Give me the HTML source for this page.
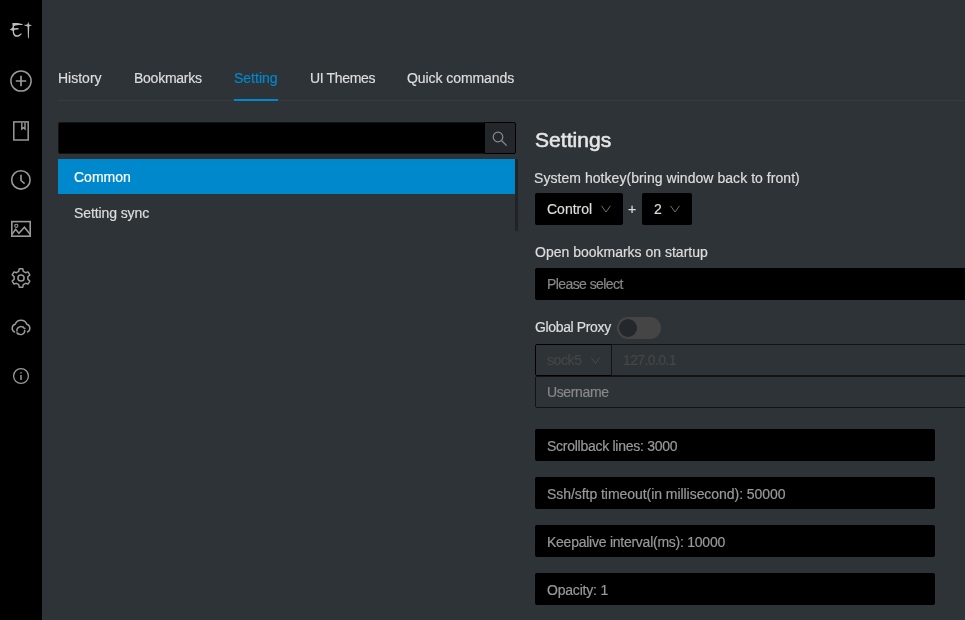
<!DOCTYPE html>
<html><head><meta charset="utf-8">
<style>
*{margin:0;padding:0;box-sizing:border-box}
html,body{width:965px;height:620px;overflow:hidden;background:#2e3338;font-family:"Liberation Sans",sans-serif;font-size:14px;color:#ddd}
.abs{position:absolute}
.t{position:absolute;line-height:22px;height:22px;white-space:nowrap;will-change:transform;-webkit-text-stroke:0.2px currentColor}
#side{position:absolute;left:0;top:0;width:42px;height:620px;background:#000}
#side svg{position:absolute;left:0;top:0}
.ic{fill:none;stroke:#999;stroke-width:1.6}
.tabline{position:absolute;left:58px;top:100px;width:907px;height:1px;background:#363b44}
.ink{position:absolute;left:234px;top:99px;width:44px;height:2px;background:#08c}
.search{position:absolute;left:58px;top:122px;width:427px;height:32px;background:#000;border:1px solid #141314;border-radius:2px 0 0 2px}
.sbtn{position:absolute;left:484px;top:122px;width:32px;height:32px;background:#23272b;border:1px solid #000;border-radius:0 2px 2px 0}
.item-act{position:absolute;left:58px;top:159px;width:457px;height:35px;background:#08c}
.track{position:absolute;left:515px;top:159px;width:3px;height:72px;background:#202428}
.box{position:absolute;background:#000;border-radius:2px}
.chev{position:absolute;fill:none;stroke:#666;stroke-width:1}
</style></head><body>
<div id="side">
  <!-- logo -->
  <svg width="42" height="42" viewBox="0 0 42 42"><g transform="translate(6,14) scale(0.051613)" fill="#bdbdbd">
    <path d="M120,180 C190,168 260,182 322,196 L318,214 C262,210 205,212 160,232 C150,250 148,262 165,275 L245,272 L238,300 L165,305 C152,330 150,360 172,392 C200,425 245,418 290,372 L308,382 C275,440 215,455 168,432 C138,412 128,372 132,330 C112,318 92,312 72,300 C98,288 118,272 128,252 C130,230 128,205 120,180 Z"/>
    <path d="M432,148 L446,204 L505,220 L450,238 L442,472 L426,472 L418,240 L338,212 L414,204 Z"/>
  </g></svg>

  <svg style="top:0" width="42" height="620" viewBox="0 0 42 620">
    <g class="ic">
      <circle cx="21" cy="81" r="10.1" stroke-width="1.5"/>
      <path d="M15.8 81H26.2M21 75.8V86.2" stroke-width="1.7"/>
      <rect x="13.8" y="121.9" width="14.4" height="18.1" stroke-width="1.5"/>
      <path d="M21.8 122.5V129L23.4 127.6L25 129V122.5" stroke-width="1.4"/>
      <circle cx="20.9" cy="179.9" r="9.2" stroke-width="1.6"/>
      <path d="M21 174.8V180.5L24.6 183.6" stroke-width="1.6"/>
      <rect x="11.8" y="221.6" width="18.4" height="14.6" stroke-width="1.6"/>
      <path d="M12 234.4L15.6 229.3L18.9 233.3L24.4 227.2L30.3 234.4" stroke-width="1.6"/>
      <circle cx="16.3" cy="225.8" r="1.6" stroke-width="1.1"/>
      <path d="M18.72 271.38 L19.23 268.87 L22.77 268.87 L23.28 271.38 L25.59 272.72 L28.02 271.90 L29.79 274.97 L27.87 276.66 L27.87 279.34 L29.79 281.03 L28.02 284.10 L25.59 283.28 L23.28 284.62 L22.77 287.13 L19.23 287.13 L18.72 284.62 L16.41 283.28 L13.98 284.10 L12.21 281.03 L14.13 279.34 L14.13 276.66 L12.21 274.97 L13.98 271.90 L16.41 272.72Z" stroke-width="1.5" stroke-linejoin="round"/>
      <circle cx="21" cy="278" r="3.1" stroke-width="1.5"/>
      <path d="M14.5 332 A4.2 4.2 0 0 1 15.2 324.2 A6.3 6.3 0 0 1 26.8 324.2 A4.2 4.2 0 0 1 27.5 332" stroke-width="1.5" stroke-linecap="round"/>
      <path d="M17.03 331.61 A3.9 3.9 0 0 1 23.70 327.99 M24.57 329.59 A3.9 3.9 0 0 1 17.90 333.21" stroke-width="1.4"/><path d="M23.50 326.39 L24.00 328.39 L25.70 328.19 M18.10 334.81 L17.60 332.81 L15.90 333.01" stroke-width="1.1"/>
      <circle cx="21" cy="376" r="7.4" stroke-width="1.3"/>
      <path d="M21 372.2V373.4M21 375V380" stroke-width="1.5"/>
    </g>
  </svg>
</div>
<div class="t" style="left:58px;top:67px">History</div>
<div class="t" style="left:134px;top:67px;letter-spacing:-0.25px">Bookmarks</div>
<div class="t" style="left:234px;top:67px;color:#08c">Setting</div>
<div class="t" style="left:310px;top:67px;letter-spacing:-0.35px">UI Themes</div>
<div class="t" style="left:407px;top:67px;letter-spacing:-0.07px">Quick commands</div>
<div class="tabline"></div>
<div class="ink"></div>

<div class="search"></div>
<div class="sbtn"></div>
<div class="item-act"></div>
<div class="track"></div>
<div class="t" style="left:74px;top:166px;color:#fff">Common</div>
<div class="t" style="left:74px;top:202px;letter-spacing:-0.1px">Setting sync</div>

<div class="t" style="left:534.5px;top:126px;font-size:21px;font-weight:normal;-webkit-text-stroke:0.55px #e6e6e6;color:#e6e6e6;line-height:28px;height:28px;letter-spacing:0.05px">Settings</div>
<div class="t" style="left:534px;top:167px;letter-spacing:0.05px">System hotkey(bring window back to front)</div>
<div class="box" style="left:535px;top:193px;width:88px;height:32px"></div>
<div class="t" style="left:547px;top:198px">Control</div>
<div class="t" style="left:628px;top:198px">+</div>
<div class="box" style="left:642px;top:193px;width:50px;height:32px"></div>
<div class="t" style="left:654px;top:198px">2</div>

<div class="t" style="left:535px;top:241px">Open bookmarks on startup</div>
<div class="box" style="left:535px;top:268px;width:440px;height:32px"></div>
<div class="t" style="left:547px;top:273px;color:#888;letter-spacing:-0.58px">Please select</div>

<div class="t" style="left:535px;top:316px;letter-spacing:-0.36px">Global Proxy</div>

<div class="box" style="left:535px;top:429px;width:400px;height:32px"></div>
<div class="t" style="left:547px;top:435px;color:#999;letter-spacing:-0.27px">Scrollback lines: 3000</div>
<div class="box" style="left:535px;top:477px;width:400px;height:32px"></div>
<div class="t" style="left:547px;top:483px;color:#999;letter-spacing:-0.05px">Ssh/sftp timeout(in millisecond): 50000</div>
<div class="box" style="left:535px;top:525px;width:400px;height:32px"></div>
<div class="t" style="left:547px;top:531px;color:#999;letter-spacing:-0.25px">Keepalive interval(ms): 10000</div>
<div class="box" style="left:535px;top:573px;width:400px;height:32px"></div>
<div class="t" style="left:547px;top:579px;color:#999;letter-spacing:-0.2px">Opacity: 1</div>

<svg class="abs" style="left:0;top:0" width="965" height="620" viewBox="0 0 965 620">
  <circle cx="498" cy="137" r="4.8" fill="none" stroke="#8a8a8a" stroke-width="1.2"/>
  <path d="M501.5 140.5L506.6 145.6" stroke="#8a8a8a" stroke-width="1.3" fill="none"/>
  <path d="M601.5 205.8L606 212L610.5 205.8" fill="none" stroke="#707070" stroke-width="1"/>
  <path d="M670.5 205.8L675 212L679.5 205.8" fill="none" stroke="#707070" stroke-width="1"/>
  <path d="M591.3 357.5L595.5 363.5L599.7 357.5" fill="none" stroke="#484848" stroke-width="1"/>
</svg>
<div class="abs" style="left:617px;top:317px;width:44px;height:22px;border-radius:11px;background:#454545"></div>
<div class="abs" style="left:619px;top:319px;width:18px;height:18px;border-radius:9px;background:#24282c"></div>

<div class="abs" style="left:535px;top:344px;width:77px;height:32px;border:1px solid #000;border-radius:2px 0 0 2px"></div>
<div class="abs" style="left:611px;top:344px;width:400px;height:32px;border:1px solid #141314"></div>
<div class="t" style="left:547px;top:349px;color:#464646;letter-spacing:-0.4px">sock5</div>
<div class="t" style="left:623px;top:349px;color:#464646;letter-spacing:-0.6px">127.0.0.1</div>
<div class="abs" style="left:535px;top:376px;width:440px;height:32px;border:1px solid #141314;border-radius:2px"></div>
<div class="t" style="left:547px;top:381px;color:#888;letter-spacing:-0.37px">Username</div>
</body></html>
